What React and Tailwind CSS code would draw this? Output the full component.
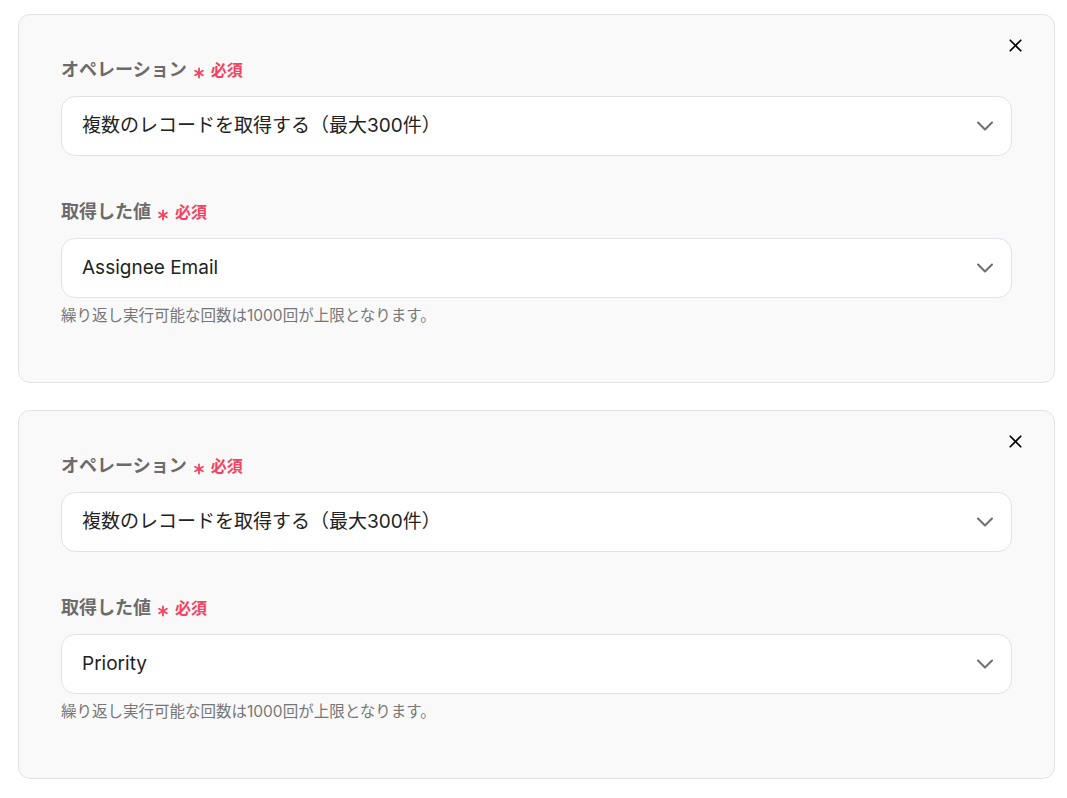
import { X, ChevronDown, Asterisk } from 'lucide-react';

const font = { fontFamily: 'Inter, "Noto Sans CJK JP", sans-serif' };

function FieldLabel({ children }) {
  return (
    <div className="flex items-center h-[24px]">
      <span className="text-[18px] font-bold text-[#6b6b6b] leading-none">{children}</span>
      <Asterisk size={18} strokeWidth={2.4} className="text-[#f5425f] mt-[5px] ml-[3px]" />
      <span className="text-[16px] font-semibold text-[#f5425f] leading-none ml-[3px]">必須</span>
    </div>
  );
}

function SelectBox({ value }) {
  return (
    <div className="flex items-center justify-between h-[60px] pl-5 pr-[12px] bg-white border border-[#e2e3e8] rounded-[14px]">
      <span className="text-[19px] text-[#222]">{value}</span>
      <ChevronDown size={28} strokeWidth={1.8} className="text-[#6f6f6f]" />
    </div>
  );
}

function RepeatCard({ value }) {
  return (
    <div className="relative bg-[#f9f9f9] border border-[#e3e3e3] rounded-[12px] px-[42px] pt-[43px] pb-[56px]">
      <button className="absolute top-[20px] right-[28px] text-black">
        <X size={21} strokeWidth={2} />
      </button>
      <FieldLabel>オペレーション</FieldLabel>
      <div className="mt-[14px]">
        <SelectBox value="複数のレコードを取得する（最大300件）" />
      </div>
      <div className="mt-[44px]">
        <FieldLabel>取得した値</FieldLabel>
      </div>
      <div className="mt-[14px]">
        <SelectBox value={value} />
      </div>
      <p className="mt-[8px] text-[15.5px] leading-[20px] text-[#777]">繰り返し実行可能な回数は1000回が上限となります。</p>
    </div>
  );
}

export default function App() {
  return (
    <div className="min-h-screen bg-white pt-[14px] pl-[18px] pr-[12px] flex flex-col gap-[27px]" style={font}>
      <RepeatCard value="Assignee Email" />
      <RepeatCard value="Priority" />
    </div>
  );
}
